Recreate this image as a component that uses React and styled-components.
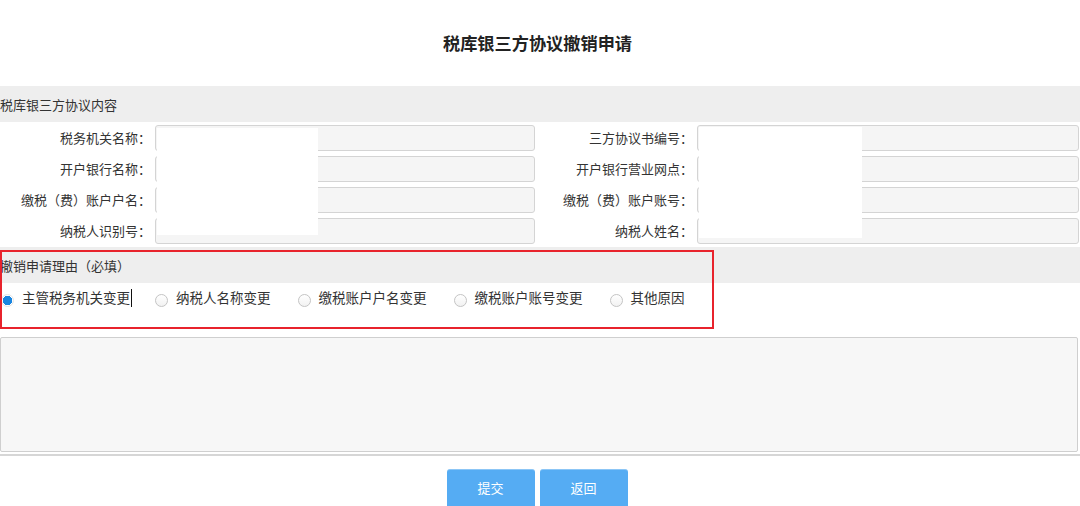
import React from "react";
import styled, { createGlobalStyle } from "styled-components";

const GlobalStyle = createGlobalStyle`
  html, body {
    margin: 0;
    padding: 0;
    background: #ffffff;
    font-family: "Noto Sans CJK SC", "Noto Sans", sans-serif;
    color: #333;
  }
`;

const Page = styled.div`
  width: 1080px;
  height: 506px;
  overflow: hidden;
  background: #fff;
`;

const Title = styled.h1`
  margin: 0;
  height: 86px;
  display: flex;
  align-items: center;
  justify-content: center;
  padding-right: 5px;
  padding-bottom: 2px;
  box-sizing: border-box;
  font-size: 17.2px;
  font-weight: bold;
  color: #222;
`;

const SectionHeader = styled.div`
  height: 36px;
  background: #eeeeee;
  display: flex;
  align-items: center;
  padding-left: ${(p) => p.$indent || 0}px;
  font-size: 13px;
  color: #333;
`;

const Fields = styled.div`
  position: relative;
  display: grid;
  grid-template-columns: 155px 380px 162px 382px;
  grid-auto-rows: 26px;
  row-gap: 5px;
  padding: 3px 0;
`;

const Label = styled.div`
  text-align: right;
  padding-right: 4px;
  line-height: 26px;
  font-size: 13px;
  color: #333;
  white-space: nowrap;
`;

const Input = styled.div`
  box-sizing: border-box;
  height: 26px;
  border: 1px solid #d4d4d4;
  border-radius: 3px;
  background: #f5f5f5;
`;

const Patch = styled.div`
  position: absolute;
  background: #ffffff;
  top: ${(p) => p.$top}px;
  left: ${(p) => p.$left}px;
  width: ${(p) => p.$w}px;
  height: ${(p) => p.$h}px;
`;

const ReasonWrap = styled.div`
  position: relative;
`;

const Highlight = styled.div`
  position: absolute;
  left: 0;
  top: 3px;
  width: 714px;
  height: 79px;
  box-sizing: border-box;
  border: 2px solid #e8232c;
  pointer-events: none;
`;

const RadioRow = styled.div`
  height: 54px;
  box-sizing: border-box;
  padding-top: 4px;
  display: flex;
  align-items: flex-start;
`;

const RadioItem = styled.label`
  display: flex;
  align-items: flex-start;
  margin-right: ${(p) => p.$mr}px;
  margin-left: ${(p) => p.$ml || 0}px;
  font-size: 13.5px;
  line-height: 20px;
  color: #333;
`;

const RadioDot = styled.span`
  width: 13px;
  height: 13px;
  box-sizing: border-box;
  margin-top: 7px;
  margin-right: 8px;
  border-radius: 50%;
  border: 1px solid ${(p) => (p.$checked ? "#e3e3e3" : "#c4c4c4")};
  background: ${(p) =>
    p.$checked
      ? "radial-gradient(circle, #1a86e0 0 4.5px, #fff 5px)"
      : "linear-gradient(#ffffff, #f2f2f2)"};
  flex-shrink: 0;
`;

const Caret = styled.span`
  display: inline-block;
  width: 1px;
  height: 18px;
  background: #111;
  margin-left: 1px;
  vertical-align: -4px;
`;

const TextArea = styled.textarea`
  display: block;
  box-sizing: border-box;
  width: 1078px;
  height: 115px;
  margin: 0;
  border: 1px solid #cfcfcf;
  border-radius: 2px;
  background: #f7f7f7;
  resize: none;
  outline: none;
`;

const Divider = styled.div`
  height: 2px;
  margin-top: 2px;
  background: #d6d6d6;
`;

const Buttons = styled.div`
  display: flex;
  justify-content: center;
  gap: 5px;
  padding-right: 6px;
  margin-top: 13px;
`;

const Button = styled.button`
  width: 88px;
  height: 40px;
  border: none;
  border-top: 1px solid #8cc6f6;
  border-radius: 3px;
  background: #55acf3;
  color: #fff;
  font-family: inherit;
  font-size: 13px;
  padding: 0 0 4px;
`;

const leftFields = ["税务机关名称：", "开户银行名称：", "缴税（费）账户户名：", "纳税人识别号："];
const rightFields = ["三方协议书编号：", "开户银行营业网点：", "缴税（费）账户账号：", "纳税人姓名："];
const reasons = ["主管税务机关变更", "纳税人名称变更", "缴税账户户名变更", "缴税账户账号变更", "其他原因"];

export default function App() {
  return (
    <Page>
      <GlobalStyle />
      <Title>税库银三方协议撤销申请</Title>
      <SectionHeader>税库银三方协议内容</SectionHeader>
      <Fields>
        {leftFields.map((l, i) => (
          <React.Fragment key={l}>
            <Label>{l}</Label>
            <Input />
            <Label>{rightFields[i]}</Label>
            <Input />
          </React.Fragment>
        ))}
        <Patch $top={6} $left={157} $w={161} $h={107} />
        <Patch $top={5} $left={699} $w={163} $h={111} />
      </Fields>
      <ReasonWrap>
        <SectionHeader $indent={-2}>撤销申请理由（必填）</SectionHeader>
        <RadioRow>
          {reasons.map((r, i) => (
            <RadioItem key={r} $ml={i === 0 ? 1 : 0} $mr={i === 0 ? 23 : 27}>
              <RadioDot $checked={i === 0} />
              <span>
                {r}
                {i === 0 && <Caret />}
              </span>
            </RadioItem>
          ))}
        </RadioRow>
        <Highlight />
      </ReasonWrap>
      <TextArea />
      <Divider />
      <Buttons>
        <Button>提交</Button>
        <Button>返回</Button>
      </Buttons>
    </Page>
  );
}
